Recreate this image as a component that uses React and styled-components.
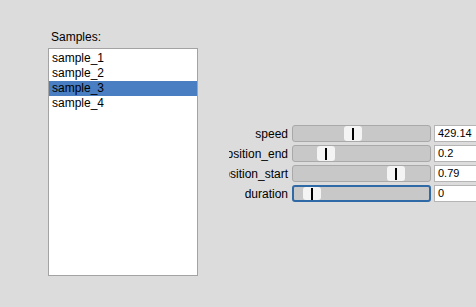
import React from "react";
import styled, { createGlobalStyle } from "styled-components";

const GlobalStyle = createGlobalStyle`
  html, body {
    margin: 0;
    padding: 0;
    background: #dcdcdc;
    overflow: hidden;
  }
  body {
    font-family: "Liberation Sans", Arial, sans-serif;
    font-size: 12px;
    color: #000;
  }
`;

const Window = styled.div`
  width: 476px;
  height: 307px;
  display: flex;
  align-items: flex-start;
  gap: 31px;
  padding-left: 48px;
  box-sizing: border-box;
  overflow: hidden;
`;

const SamplesPanel = styled.div`
  display: flex;
  flex-direction: column;
  padding-top: 30px;
  gap: 4px;
`;

const Caption = styled.div`
  padding-left: 3px;
  line-height: 14px;
`;

const ListBox = styled.div`
  width: 150px;
  height: 228px;
  box-sizing: border-box;
  background: #fff;
  border: 1px solid #a3a3a3;
  padding-top: 2px;
`;

const Item = styled.div`
  height: 15px;
  line-height: 15px;
  padding-left: 3px;
  background: ${(p) => (p.$selected ? "#4a7ec3" : "transparent")};
`;

const Params = styled.div`
  margin-top: 125px;
  display: grid;
  grid-template-columns: 60px 139px 60px;
  grid-auto-rows: 17px;
  column-gap: 3px;
  row-gap: 3px;
`;

const Label = styled.div`
  display: flex;
  justify-content: flex-end;
  align-items: center;
  overflow: hidden;
  white-space: nowrap;
  padding-right: 1px;
`;

const Groove = styled.div`
  position: relative;
  box-sizing: border-box;
  background: #c8c8c8;
  border: ${(p) => (p.$focused ? "2px solid #2f6aa6" : "1px solid #a9a9a9")};
  border-radius: 3px;
`;

const Handle = styled.div`
  position: absolute;
  top: 0;
  bottom: 0;
  width: 18px;
  margin-left: -9px;
  background: #f4f4f4;
  border-radius: 3px;
  display: flex;
  justify-content: center;
  align-items: center;
  &::after {
    content: "";
    width: 2px;
    height: 12px;
    background: #000;
  }
`;

const ValueBox = styled.div`
  box-sizing: border-box;
  background: #fff;
  border: 1px solid #b5b5b5;
  border-right: none;
  padding-left: 3px;
  line-height: 15px;
  font-size: 11px;
`;

const samples = ["sample_1", "sample_2", "sample_3", "sample_4"];

const params = [
  { name: "speed", value: "429.14", pos: 60 },
  { name: "position_end", value: "0.2", pos: 33 },
  { name: "position_start", value: "0.79", pos: 103 },
  { name: "duration", value: "0", pos: 18, focused: true },
];

export default function App() {
  return (
    <>
      <GlobalStyle />
      <Window>
        <SamplesPanel>
          <Caption>Samples:</Caption>
          <ListBox>
            {samples.map((s) => (
              <Item key={s} $selected={s === "sample_3"}>
                {s}
              </Item>
            ))}
          </ListBox>
        </SamplesPanel>
        <Params>
          {params.map((p) => (
            <React.Fragment key={p.name}>
              <Label>{p.name}</Label>
              <Groove $focused={p.focused}>
                <Handle style={{ left: p.pos }} />
              </Groove>
              <ValueBox>{p.value}</ValueBox>
            </React.Fragment>
          ))}
        </Params>
      </Window>
    </>
  );
}
